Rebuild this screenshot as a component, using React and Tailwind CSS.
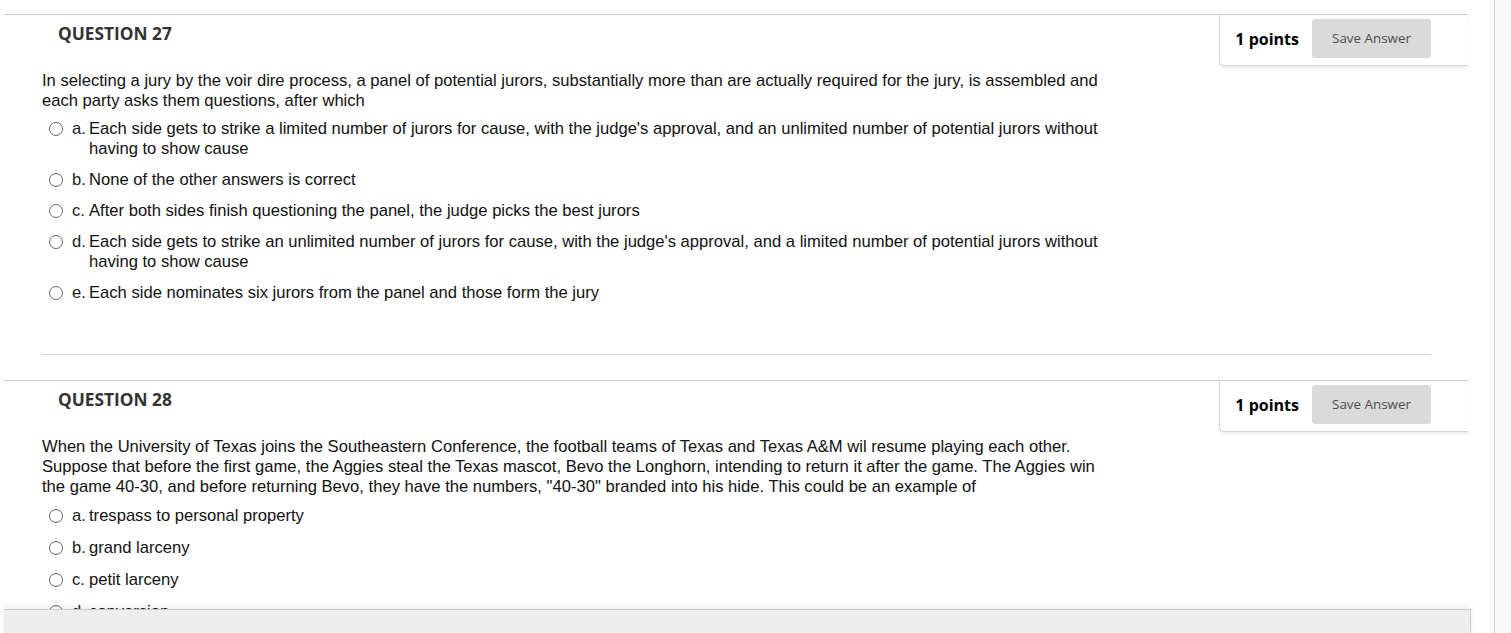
import React from "react";

const body = { fontFamily: '"Liberation Sans", Arial, sans-serif' };
const open = { fontFamily: '"Open Sans", "Liberation Sans", sans-serif' };

function Option({ letter, children }) {
  return (
    <div className="flex items-start pl-[7px]">
      <div className="mt-[3px] w-[14px] h-[14px] rounded-full border border-[#666666] bg-white shrink-0" />
      <div className="ml-[9px] w-[17px] shrink-0 text-[16.6px] leading-[20px] text-[#222]">{letter}.</div>
      <div className="w-[1023px] text-[16.6px] leading-[20px] text-[#111]">{children}</div>
    </div>
  );
}

function Question({ num, text, options, divider, tight }) {
  return (
    <section className="ml-[4px] w-[1464px] border-t border-[#d0d0d0]">
      <div className="flex items-start justify-between">
        <h2 className="pl-[54px] pt-[7px] text-[17.3px] leading-[24px] font-bold text-[#333]" style={open}>
          QUESTION {num}
        </h2>
        <div className="flex items-start border-l border-b border-[#d4d4d4] rounded-bl-[5px] pl-[15px] pr-[37px] pt-[4px] pb-[7px] shadow-[0_2px_3px_rgba(0,0,0,0.07)] bg-white">
          <div className="h-[39px] flex items-center text-[16px] font-bold text-black" style={open}>
            1 points
          </div>
          <button className="ml-[13px] w-[119px] h-[39px] rounded-[3px] bg-[#dadada] text-[13.4px] text-[#4d4d4d]" style={open}>
            Save Answer
          </button>
        </div>
      </div>
      <div className="pl-[38px] mt-[5px]" style={body}>
        <p className="w-[1070px] text-[16.6px] leading-[20px] text-[#111]">{text}</p>
        <div className={tight ? "mt-[8px] flex flex-col gap-[11px]" : "mt-[9px] flex flex-col gap-[12px]"}>
          {options.map((o) => (
            <Option key={o[0]} letter={o[0]}>
              {o[1]}
            </Option>
          ))}
        </div>
      </div>
      {divider && (
        <div className="mt-[51px] mb-[25px] ml-[38px] mr-[37px] border-t border-[#d4d4d4]" />
      )}
    </section>
  );
}

export default function App() {
  return (
    <div className="flex h-[633px] w-[1511px] overflow-hidden bg-white">
      <div className="relative w-[1494px] h-[633px] overflow-hidden pt-[14px]">
        <Question
          num={27}
          divider
          tight
          text="In selecting a jury by the voir dire process, a panel of potential jurors, substantially more than are actually required for the jury, is assembled and each party asks them questions, after which"
          options={[
            ["a", "Each side gets to strike a limited number of jurors for cause, with the judge's approval, and an unlimited number of potential jurors without having to show cause"],
            ["b", "None of the other answers is correct"],
            ["c", "After both sides finish questioning the panel, the judge picks the best jurors"],
            ["d", "Each side gets to strike an unlimited number of jurors for cause, with the judge's approval, and a limited number of potential jurors without having to show cause"],
            ["e", "Each side nominates six jurors from the panel and those form the jury"],
          ]}
        />
        <Question
          num={28}
          text={'When the University of Texas joins the Southeastern Conference, the football teams of Texas and Texas A&M wil resume playing each other. Suppose that before the first game, the Aggies steal the Texas mascot, Bevo the Longhorn, intending to return it after the game. The Aggies win the game 40-30, and before returning Bevo, they have the numbers, "40-30" branded into his hide. This could be an example of'}
          options={[
            ["a", "trespass to personal property"],
            ["b", "grand larceny"],
            ["c", "petit larceny"],
            ["d", "conversion"],
          ]}
        />
        <div className="absolute left-[4px] bottom-0 w-[1467px] h-[24px] bg-[#eeeeee] border-t border-r border-[#c8c8c8] shadow-[0_-3px_7px_rgba(0,0,0,0.07)]" />
      </div>
      <div className="w-[17px] h-[633px] border-l border-[#cfcfcf] bg-[#f8f8f8]" />
    </div>
  );
}
